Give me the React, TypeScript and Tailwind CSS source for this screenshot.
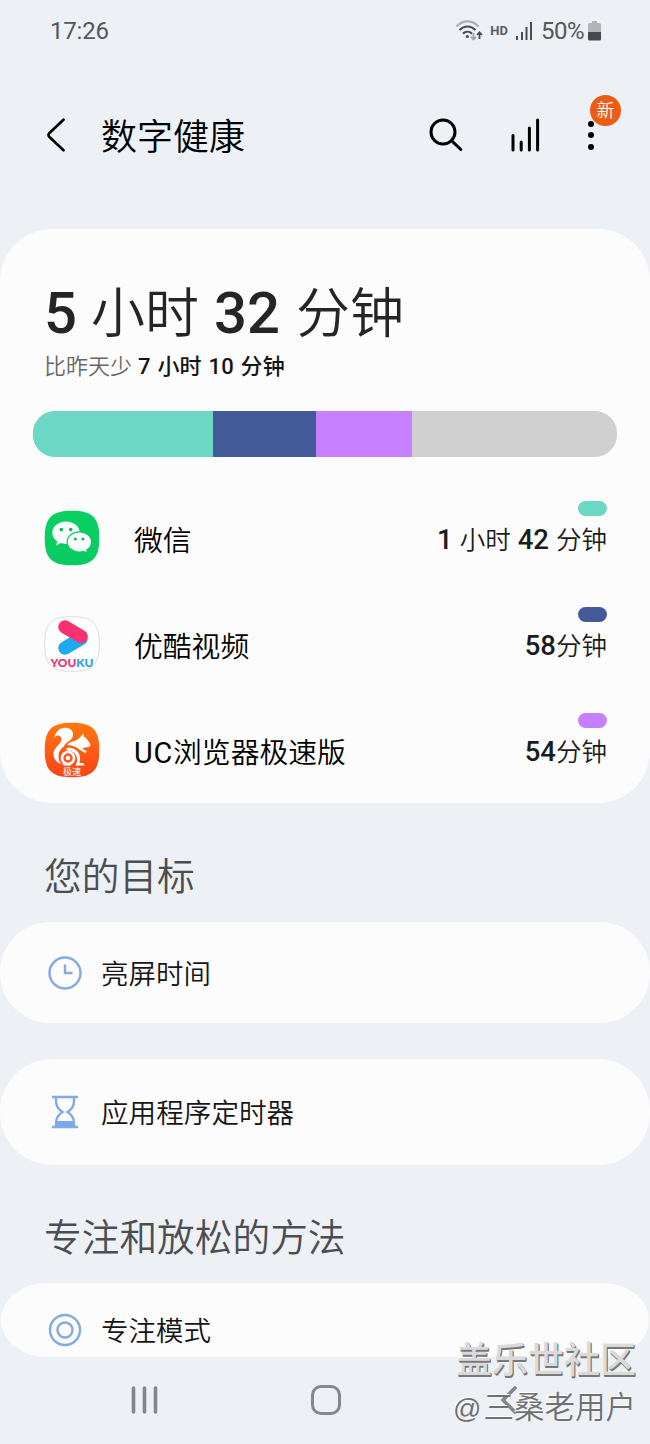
import React from "react";

type AppUsage = {
  name: string;
  icon: React.ReactNode;
  hours?: string;
  minutes: string;
  pill: string;
};

const WeChatIcon = () => (
  <svg width="56" height="56" viewBox="0 0 56 56">
    <defs>
      <linearGradient id="wechat" x1="0" y1="0" x2="0" y2="1">
        <stop offset="0" stopColor="#0ccf62" />
        <stop offset="1" stopColor="#08cc62" />
      </linearGradient>
    </defs>
    <path d="M28 .7C48.500.7 55.300 7.500 55.300 28S48.500 55.300 28 55.300.7 48.500.7 28 7.500.7 28 .7Z" fill="url(#wechat)" />
    <path d="M22 11.500c-7.700 0-13.700 5-13.700 11.300 0 3.600 1.900 6.600 5 8.700l-1.300 4 4.700-2.400c1.700.5 3.400.8 5.300.8 7.700 0 13.800-4.900 13.800-11.100S29.700 11.500 22 11.500Z" fill="#fff" />
    <path d="M35.500 21.800c-7 0-12.300 4.500-12.300 10.100S28.500 42 35.500 42c1.600 0 3-.2 4.300-.6l3.900 2.100-1-3.500c3-1.900 4.900-4.800 4.900-8.100 0-5.600-5.200-10.100-12.100-10.100Z" fill="#fff" stroke="#08cc62" strokeWidth="1.200" />
    <circle cx="17.300" cy="19.600" r="1.800" fill="#0bb85a" />
    <circle cx="26.700" cy="19.600" r="1.800" fill="#0bb85a" />
    <circle cx="31.300" cy="29" r="1.500" fill="#0bb85a" />
    <circle cx="39" cy="29" r="1.500" fill="#0bb85a" />
  </svg>
);

const YoukuIcon = () => (
  <svg width="56" height="56" viewBox="0 0 56 56">
    <path d="M28 .7C48.500.7 55.300 7.500 55.300 28S48.500 55.300 28 55.300.7 48.500.7 28 7.500.7 28 .7Z" fill="#fff" stroke="#dcdcdc" strokeWidth="1" />
    <path d="M21 32 37 22.500" stroke="#1daaf0" strokeWidth="13.500" strokeLinecap="round" />
    <path d="M21 11 37 20.500" stroke="#f7336f" strokeWidth="13.500" strokeLinecap="round" />
    <text x="6.500" y="51" fontFamily="Lato, sans-serif" fontWeight="900" fontSize="12" textLength="43" lengthAdjust="spacingAndGlyphs">
      <tspan fill="#ee2e70">YOU</tspan>
      <tspan fill="#1d9fe6">KU</tspan>
    </text>
  </svg>
);

const UCIcon = () => (
  <svg width="56" height="56" viewBox="0 0 56 56">
    <defs>
      <linearGradient id="uc" x1="0" y1="0" x2="0" y2="1">
        <stop offset="0" stopColor="#ff790c" />
        <stop offset="1" stopColor="#f8421b" />
      </linearGradient>
    </defs>
    <path d="M28 .7C48.500.7 55.300 7.500 55.300 28S48.500 55.300 28 55.300.7 48.500.7 28 7.500.7 28 .7Z" fill="url(#uc)" />
    {/* tail */}
    <path d="M10.500 15.500C11.500 9 16.500 5.300 22 5.800c5.500.5 8.500 5 6.500 9.500-1.800 3.900-7.500 5.200-8.500 9.200-3.500 2-5.500 5.500-5.500 9.500 0 2.700.8 5.500 2.500 8-4.500-1.500-7.500-5.300-7.500-10 0-7 7.500-9.500 8-14.500.2-2.700-1.800-4.500-4.200-4-.9.200-2 .9-2.800 2Z" fill="#fff" />
    {/* head and chest */}
    <path d="M23.500 23c1-2.700 4.500-3.300 7.500-4.200 2.400-.8 4-2.600 5.800-4.300l2.400-3 .9 3.200c2.700 1.500 5 4.700 6.600 8.600-1.500 1.900-3.500 2.400-6.500 2.200l-2 1.200 4.500 2.300-1.200 2.300-5.500-3.300c-3.300-2.900-7.500-4.800-12.500-5Z" fill="#fff" />
    <path d="M22.500 26c8-1.200 14.300 4.300 13.500 11.500l-.6 3.500H39q1.500 1 1.500 2.500H31.500c2.500-4.500 2-9.500-1.200-12.500-2-2-4.800-2.800-7.800-2.500Z" fill="#fff" />
    <circle cx="24" cy="36" r="6" fill="none" stroke="#fff" strokeWidth="2.600" />
    <circle cx="24" cy="36" r="2.300" fill="#fff" />
    <path d="M18 41.500h9v2h-7Z" fill="#fff" />
    <text x="28" y="52.500" textAnchor="middle" fontFamily="'Noto Sans CJK SC', sans-serif" fontWeight="500" fontSize="9" fill="#ffe9df">极速</text>
  </svg>
);

const apps: AppUsage[] = [
  { name: "微信", icon: <WeChatIcon />, hours: "1", minutes: "42", pill: "bg-[#6ad8c4]" },
  { name: "优酷视频", icon: <YoukuIcon />, minutes: "58", pill: "bg-[#425b98]" },
  { name: "UC浏览器极速版", icon: <UCIcon />, minutes: "54", pill: "bg-[#c680ff]" },
];

const StatusBar = () => (
  <div className="flex h-[62px] items-center justify-between pl-[50px] pr-[49px] text-2xl font-normal text-[#56575a]">
    <span className="tracking-[-0.200px]">17:26</span>
    <div className="flex items-center">
      <svg width="28" height="22" viewBox="0 0 28 22" fill="none" strokeWidth="2.200">
        <path d="M1.500 6.500C8-.3 17-.3 23.500 6.500" stroke="#adafb1" />
        <path d="M4.500 10c4.700-4.700 11.300-4.700 16 0M8 13.600c2.600-2.500 6.400-2.500 9 0" stroke="#4b4c4f" />
        <circle cx="12.300" cy="16.500" r="1.600" fill="#4b4c4f" />
        <path d="M18.500 13v6M16 16.800l2.500 2.700 2.500-2.700" stroke="#a0a2a4" strokeWidth="1.800" />
        <path d="M24.500 19v-6.500M22 15l2.500-2.700L27 15" stroke="#4b4c4f" strokeWidth="1.800" />
      </svg>
      <span className="ml-[7px] pb-[2px] text-[13px] font-bold leading-none text-[#5b5c5f]">HD</span>
      <svg className="ml-[7px]" width="18" height="20" viewBox="0 0 18 20" stroke="#4b4c4f" strokeWidth="2">
        <path d="M2 15v4M7 11v8M11.500 6v13M16 1v18" />
      </svg>
      <span className="ml-[8px] tracking-[-0.500px]">50%</span>
      <svg className="ml-[4px]" width="13" height="20" viewBox="0 0 13 20">
        <path d="M4 0h5v2h2.500Q13 2 13 3.500V12H0V3.500Q0 2 1.500 2H4Z" fill="#b3b4b6" />
        <path d="M0 11h13v7q0 1.500-1.500 1.500h-10Q0 19.500 0 18Z" fill="#47484b" />
      </svg>
    </div>
  </div>
);

const Header = () => (
  <header className="flex h-[167px] items-start pl-[46px] pt-[49px]">
    <div className="flex h-12 w-full items-center">
      <svg width="20" height="34" viewBox="0 0 20 34" fill="none" stroke="#000" strokeWidth="2.600" strokeLinecap="round" strokeLinejoin="round">
        <path d="M17.500 1.700 3.200 15.200q-1.400 1.800 0 3.500L17.500 32.300" />
      </svg>
      <h1 className="ml-[35px] pt-[6px] text-4xl leading-[48px] text-black">数字健康</h1>
      <svg className="ml-[184px]" width="34" height="34" viewBox="0 0 34 34" fill="none" stroke="#000" strokeWidth="3" strokeLinecap="round">
        <circle cx="14" cy="14" r="12" />
        <path d="m22.800 22.800 9 8.700" />
      </svg>
      <svg className="ml-12" width="30" height="34" viewBox="0 0 30 34" stroke="#000" strokeWidth="3" strokeLinecap="round">
        <path d="M2 17.500V32M10.200 24v8M18.400 10v22M26.600 2v30" />
      </svg>
      <div className="relative ml-[47px] flex flex-col gap-[5.500px]">
        <i className="size-[6px] rounded-full bg-black" />
        <i className="size-[6px] rounded-full bg-black" />
        <i className="size-[6px] rounded-full bg-black" />
        <span className="absolute -top-[26px] left-[2px] flex size-[31px] items-center justify-center rounded-full bg-[#ec5c14] pt-px text-lg leading-none text-white">
          新
        </span>
      </div>
    </div>
  </header>
);

const UsageCard = () => (
  <section className="h-[574px] rounded-[52px] bg-[#fcfcfd] pt-[47px]">
    <div className="flex h-[75px] items-baseline pl-11 text-[54px] leading-[74px] text-[#252525]">
      <b className="text-[58px] font-medium">5</b>
      <span className="ml-[14px]">小时</span>
      <b className="ml-[15px] text-[58px] font-medium">32</b>
      <span className="ml-[16px]">分钟</span>
    </div>
    <div className="flex h-8 items-baseline pl-11 text-[22px] leading-8 text-[#151515]">
      <span className="text-[#666]">比昨天少</span>
      <b className="ml-[6px] font-medium tracking-[0.200px] [word-spacing:1px]">7 小时 10 分钟</b>
    </div>
    <div className="ml-[32.500px] mt-[27.500px] flex h-[46.500px] w-[584.500px] overflow-hidden rounded-[22px] bg-[#d0d0d0]">
      <div className="w-[180.500px] bg-[#6ad8c4]" />
      <div className="w-[103px] bg-[#425b98]" />
      <div className="w-[96px] bg-[#c680ff]" />
    </div>
    <div className="mt-[28px]">
      {apps.map((app) => (
        <div key={app.name} className="flex h-[106px] items-center pl-11 pr-[43px]">
          {app.icon}
          <span className="ml-[34px] pt-[7px] text-[28.800px] text-black">
            {app.name.startsWith("UC") ? (
              <>
                <span className="font-normal tracking-[0.800px]">UC</span>
                {app.name.slice(2)}
              </>
            ) : (
              app.name
            )}
          </span>
          <div className="ml-auto flex flex-col items-end pb-[18px]">
            <i className={`mb-[6px] h-[15px] w-[29px] rounded-full ${app.pill}`} />
            <div className="flex h-[36px] items-baseline text-[25.500px] leading-[36px] text-[#1c1c1c]">
              {app.hours && (
                <>
                  <b className="text-[27.500px] font-medium">{app.hours}</b>
                  <span className="mx-[7px]">小时</span>
                </>
              )}
              <b className="text-[27.500px] font-medium">{app.minutes}</b>
              <span className={app.hours ? "ml-[7px]" : ""}>分钟</span>
            </div>
          </div>
        </div>
      ))}
    </div>
  </section>
);

const SectionTitle = ({ children }: { children: React.ReactNode }) => (
  <h2 className="flex h-[118.500px] items-center pl-11 pt-[29px] text-[37.700px] leading-[52px] text-[#4c4d50]">{children}</h2>
);

const App: React.FC = () => {
  return (
    <div className="relative h-[1444px] w-[650px] overflow-hidden bg-[#edf0f4] font-[Roboto,'Noto_Sans_CJK_SC',sans-serif] font-[350]">
      <StatusBar />
      <Header />
      <UsageCard />

      <SectionTitle>您的目标</SectionTitle>
      <section className="flex h-[101px] items-center rounded-[50px] bg-[#fcfcfd] pl-12 pt-px text-[27.500px] text-[#151515]">
        <svg width="34" height="34" viewBox="0 0 34 34" fill="none" stroke="#83aae2" strokeWidth="2.400">
          <circle cx="17" cy="17" r="15.500" />
          <path d="M17 8.500V17h7.500" />
        </svg>
        <span className="ml-[19px] pt-[4px]">亮屏时间</span>
      </section>
      <section className="mt-[36px] flex h-[106px] items-center rounded-[52px] bg-[#fcfcfd] pl-[51px] text-[27.600px] text-[#151515]">
        <svg width="28" height="34" viewBox="0 0 28 34" fill="none" stroke="#83aae2" strokeWidth="2.400">
          <path d="M1 2h26M1 32h26M5 2v4q0 7 6.500 11Q5 21 5 28v4M23 2v4q0 7-6.500 11Q23 21 23 28v4" />
          <path d="M5 26h18v5H5Z" fill="#79a9f5" stroke="none" />
        </svg>
        <span className="ml-[22px] pt-[4px]">应用程序定时器</span>
      </section>

      <SectionTitle>专注和放松的方法</SectionTitle>
      <section className="mx-px flex h-[74px] items-center rounded-[46px/37px] bg-[#fcfcfd] pl-[47px] pt-[19px] text-[27.500px] text-[#151515]">
        <svg width="34" height="34" viewBox="0 0 34 34" fill="none" stroke="#83aae2" strokeWidth="2.400">
          <circle cx="17" cy="17" r="15" />
          <circle cx="17" cy="17" r="7.500" />
        </svg>
        <span className="ml-[19px] pt-[4px]">专注模式</span>
      </section>

      <nav className="flex h-[86px] items-center text-[#858689]">
        <svg className="ml-[131px]" width="27" height="28" viewBox="0 0 27 28" stroke="currentColor" strokeWidth="3.600" strokeLinecap="round">
          <path d="M2.500 2v24M13.500 2v24M24.500 2v24" />
        </svg>
        <div className="ml-[153px] size-[30px] rounded-[10px] border-[3.500px] border-current" />
        <svg className="ml-[160px]" width="16" height="28" viewBox="0 0 16 28" fill="none" stroke="currentColor" strokeWidth="3.600" strokeLinecap="round">
          <path d="M14 2 2 14l12 12" />
        </svg>
      </nav>

      {/* community signature */}
      <div className="absolute right-[14px] top-[1339px] flex flex-col items-end">
        <div className="text-[36px] font-medium leading-[44px] text-[#dadadb] [text-shadow:1px_1px_0_#77787a,1px_2px_0_#77787a,-1px_-1px_0_#f8f8f8]">盖乐世社区</div>
        <div className="mt-[3px] flex items-baseline text-[30.500px] leading-[44px] text-[#6f7072] [text-shadow:-1px_-1px_0_#fff]">
          <span className="mr-[2px] font-['Liberation_Sans'] text-[28px]">@</span>
          <span>三桑老用户</span>
        </div>
      </div>
    </div>
  );
};

export default App;
